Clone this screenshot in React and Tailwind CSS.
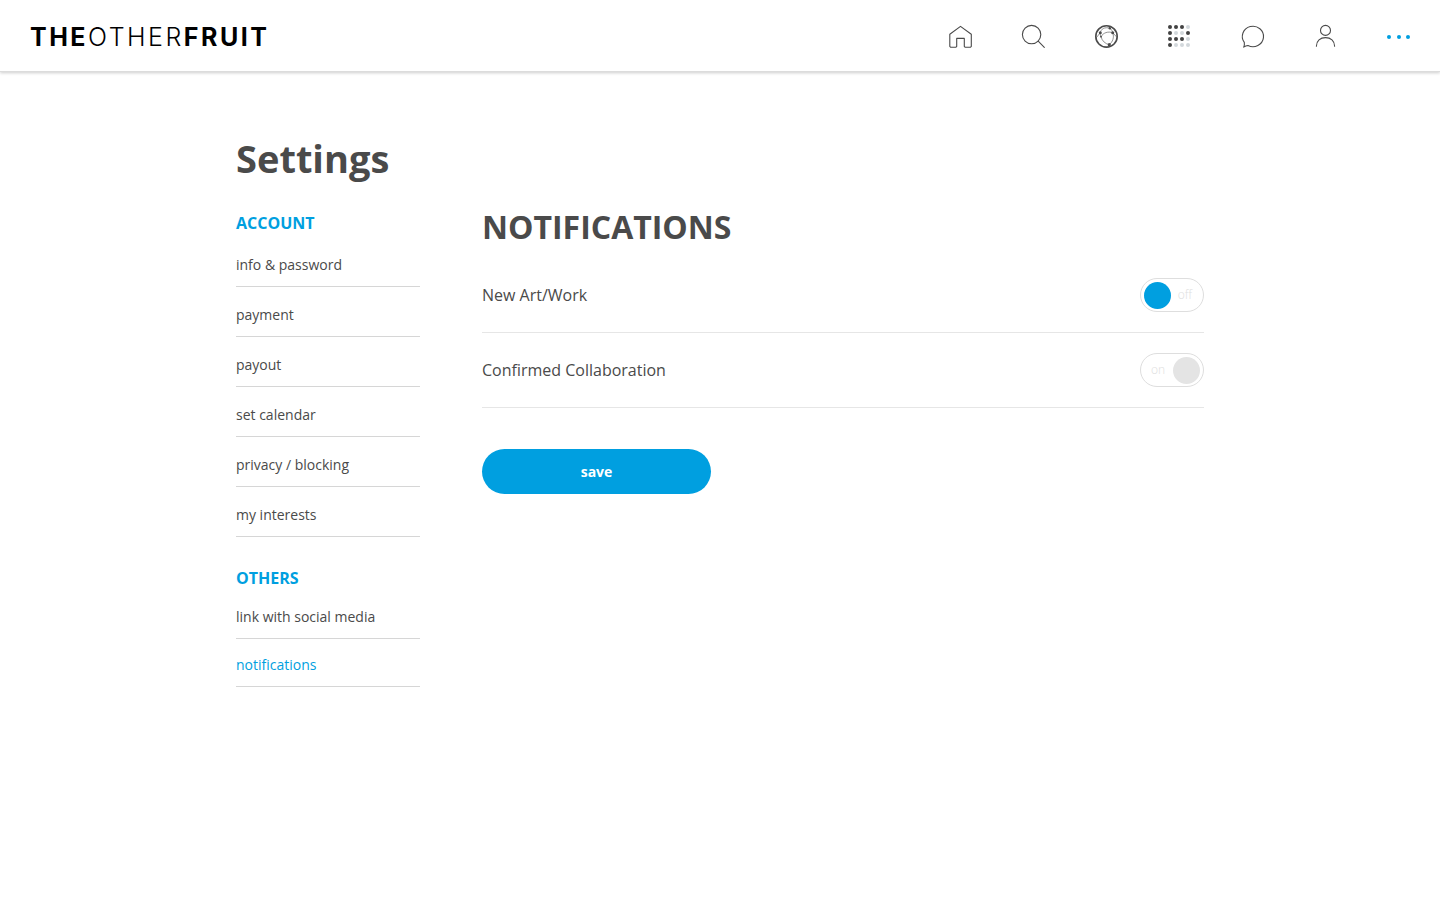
import { useState } from "react";

function Icon({ children }) {
  return (
    <svg
      viewBox="0 0 24 24"
      className="size-6 overflow-visible"
      fill="none"
      stroke="#4a4a4a"
      strokeWidth="1.1"
      strokeLinecap="round"
      strokeLinejoin="round"
      aria-hidden="true"
    >
      {children}
    </svg>
  );
}

const GRID = ["1110", "1001", "1110", "1000"];

const NAV = [
  {
    label: "Home",
    icon: (
      <Icon>
        <path d="M.8 10.2 11.5 2.4l10.8 7.8v12.2l-.9.9h-5.2l-.9-.9v-8H7.7v8l-.9.9H1.7l-.9-.9Z" />
      </Icon>
    ),
  },
  {
    label: "Search",
    icon: (
      <Icon>
        <circle cx="9.6" cy="10.6" r="9.2" />
        <path d="m16.2 17.2 6.1 6.1" />
      </Icon>
    ),
  },
  {
    label: "Network",
    icon: (
      <Icon>
        <circle cx="11.5" cy="12.4" r="10.7" strokeWidth="1.6" />
        <g strokeWidth=".6">
          <path d="M14.8 4.2C9.5 2.6 6 5 5.3 8.7c-.3 1.3 0 2.7.7 4" />
          <path d="M14.8 4.2c1.6 1.2 2.6 2.6 2.9 4.5 1.8 4.6 0 9.3-3.4 12" />
          <path d="M17.7 8.7c-4.7-1.7-9.4 0-11.7 4 1.2 4.5 4.3 7.2 8.3 8" />
          <path d="M5.3 8.7 1.5 13.5M17.7 8.7l4.2 4.5" />
        </g>
        <g fill="#4a4a4a" stroke="none">
          <circle cx="14.8" cy="4.2" r="1.2" />
          <circle cx="5.3" cy="8.7" r="1.5" />
          <circle cx="17.7" cy="8.7" r="1.5" />
          <circle cx="6" cy="12.7" r=".9" />
          <circle cx="14.3" cy="20.7" r="1.6" />
        </g>
      </Icon>
    ),
  },
  {
    label: "Gallery",
    icon: (
      <Icon>
        {GRID.map((row, y) =>
          row.split("").map((dot, x) => (
            <circle
              key={`${x}-${y}`}
              cx={2 + x * 6}
              cy={3 + y * 6}
              r="2"
              stroke="none"
              fill={dot === "1" ? "#424242" : "#d3d8dc"}
            />
          ))
        )}
      </Icon>
    ),
  },
  {
    label: "Messages",
    icon: (
      <Icon>
        <path d="M3.3 18.4A10.6 10.2 0 1 1 7 21.5c-1.4.2-2.7.6-4.3 1.6.7-1.7.9-3.2.6-4.7Z" />
      </Icon>
    ),
  },
  {
    label: "Profile",
    icon: (
      <Icon>
        <circle cx="11.5" cy="6.4" r="5" />
        <path d="M2.4 22.2C2.4 17 6.3 13.6 11.5 13.6s9.1 3.4 9.1 8.6" />
      </Icon>
    ),
  },
  {
    label: "More",
    icon: (
      <Icon>
        <g fill="#009fe0" stroke="none">
          <circle cx="2" cy="13" r="2" />
          <circle cx="12" cy="13" r="2" />
          <circle cx="21" cy="13" r="2" />
        </g>
      </Icon>
    ),
  },
];

const ACCOUNT = ["info & password", "payment", "payout", "set calendar", "privacy / blocking", "my interests"];
const OTHERS = ["link with social media", "notifications"];

function SideLink({ label, active, rowClass }) {
  return (
    <li>
      <a
        href="#"
        aria-current={active ? "page" : undefined}
        className={`flex items-end border-b border-[#d6d6d6] pb-[11px] text-sm leading-5 ${rowClass} ${
          active ? "text-[#009fe0]" : ""
        }`}
      >
        {label}
      </a>
    </li>
  );
}

function SettingRow({ id, label, initial }) {
  const [on, setOn] = useState(initial);
  return (
    <div className="flex h-[75px] items-center justify-between border-b border-[#e6e6e6]">
      <label htmlFor={id} className="text-base">
        {label}
      </label>
      <div
        className={`relative flex h-[34px] w-16 items-center justify-between rounded-full border border-[#dedede] has-focus-visible:outline-2 ${
          on ? "flex-row-reverse pr-[3px] pl-2.5" : "pr-[11px] pl-[3px]"
        }`}
      >
        <input
          id={id}
          type="checkbox"
          role="switch"
          checked={on}
          onChange={(e) => setOn(e.target.checked)}
          className="absolute inset-0 cursor-pointer appearance-none rounded-full"
        />
        <span className={`size-[27px] rounded-full ${on ? "bg-[#e4e4e4]" : "bg-[#009fe0]"}`} />
        <span className="text-xs font-light text-[#dedede]">{on ? "on" : "off"}</span>
      </div>
    </div>
  );
}

export default function App() {
  return (
    <div className="min-h-screen bg-white font-['Open_Sans',sans-serif] text-[#4a4a4a]">
      <header className="flex items-start justify-between border-b border-[#dcdcdc] pt-6 pr-[29px] pb-[23px] pl-[30px] shadow-[0_1px_3px_rgba(0,0,0,0.2)]">
        <a href="#" className="h-6 font-[Inter,sans-serif] text-[25px] leading-[26px] font-light tracking-widest text-black">
          <span className="font-bold">THE</span>OTHER<span className="font-bold">FRUIT</span>
        </a>
        <nav aria-label="Main">
          <ul className="flex gap-[49px]">
            {NAV.map((item) => (
              <li key={item.label}>
                <a href="#" aria-label={item.label} className="block">
                  {item.icon}
                </a>
              </li>
            ))}
          </ul>
        </nav>
      </header>

      <main className="mx-auto max-w-[968px] pt-[62px]">
        <h1 className="text-[38px] leading-[48px] font-bold">Settings</h1>
        <div className="mt-6 flex gap-[62px]">
          <nav aria-label="Settings" className="w-46 shrink-0 pt-[5px]">
            <h2 className="mb-0.5 text-base leading-6 font-bold text-[#009fe0]">ACCOUNT</h2>
            <ul>
              {ACCOUNT.map((label) => (
                <SideLink key={label} label={label} rowClass="h-[50px]" />
              ))}
            </ul>
            <h2 className="mt-[29px] mb-px text-base leading-6 font-bold text-[#009fe0]">OTHERS</h2>
            <ul>
              {OTHERS.map((label) => (
                <SideLink key={label} label={label} active={label === "notifications"} rowClass="h-12" />
              ))}
            </ul>
          </nav>

          <section className="min-w-0 flex-1">
            <h2 className="mb-2.5 text-[32px] leading-[42px] font-bold">NOTIFICATIONS</h2>
            <SettingRow id="new-art" label="New Art/Work" initial={false} />
            <SettingRow id="collaboration" label="Confirmed Collaboration" initial={true} />
            <button
              type="button"
              className="mt-[41px] h-[45px] w-[229px] cursor-pointer rounded-full bg-[#009fe0] text-sm font-bold text-white"
            >
              save
            </button>
          </section>
        </div>
      </main>
    </div>
  );
}
